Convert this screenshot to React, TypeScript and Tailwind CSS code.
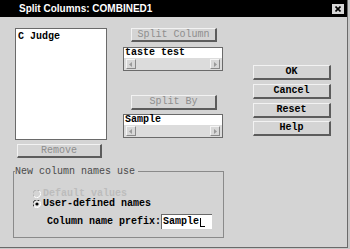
import React from 'react';

const MONO = "font-['Liberation_Mono','DejaVu_Sans_Mono',monospace]";

const Btn = ({ label, disabled = false, className = '' }: { label: string; disabled?: boolean; className?: string }) => (
  <div
    className={`shrink-0 flex items-center justify-center border-t border-l border-[#f2f2f2] border-b-2 border-r-2 border-b-[#5c5c5c] border-r-[#5c5c5c] bg-[#d4d4d4] text-[10px] leading-none ${MONO} ${
      disabled ? 'text-[#8e8e8e]' : 'font-bold text-black'
    } ${className}`}
  >
    {label}
  </div>
);

const Arrow = ({ dir }: { dir: 'left' | 'right' }) => (
  <div className="w-[10px] h-[10px] border-t border-l border-[#f4f4f4] border-b border-r border-b-[#8a8a8a] border-r-[#8a8a8a] bg-[#d8d8d8] flex items-center justify-center">
    <svg width="4" height="5" viewBox="0 0 4 5">
      {dir === 'left' ? <path d="M3 0 L0 2.5 L3 5 Z" fill="#9a9a9a" /> : <path d="M1 0 L4 2.5 L1 5 Z" fill="#9a9a9a" />}
    </svg>
  </div>
);

const ScrollField = ({ value }: { value: string }) => (
  <div className="w-[100px] shrink-0 border border-[#6a6a6a] bg-white">
    <div className={`h-[10px] pl-[1px] text-[10px] leading-[10px] font-bold text-black ${MONO}`}>{value}</div>
    <div className="h-[12px] bg-[#dcdcdc] flex items-center justify-between px-[2px]">
      <Arrow dir="left" />
      <Arrow dir="right" />
    </div>
  </div>
);

const Radio = ({ checked, disabled }: { checked: boolean; disabled?: boolean }) => (
  <svg width="8" height="8" viewBox="0 0 8 8" className="shrink-0">
    <circle cx="4" cy="4" r="3.5" fill={disabled ? '#d4d4d4' : '#e8e8e8'} />
    <path d="M1 6.5 A3.5 3.5 0 0 1 6.5 1" stroke={disabled ? '#b4b4b4' : '#3a3a3a'} strokeWidth="1" fill="none" />
    <path d="M6.5 1 A3.5 3.5 0 0 1 1 6.5" stroke="#ffffff" strokeWidth="1" fill="none" />
    {checked && <circle cx="4" cy="4" r="1.6" fill="#000" />}
  </svg>
);

export default function App() {
  return (
    <div className="w-[350px] h-[249px] bg-[#c8c8c8]">
      <div className="w-[348px] h-[248px] bg-[#d4d4d4] border-r border-b border-[#6a6a6a] flex flex-col">
        {/* Title bar */}
        <div className="h-[17px] shrink-0 bg-black flex items-center justify-between pl-[19px] pr-[3px]">
          <span className="text-white font-bold text-[10px] leading-none font-['Liberation_Sans',Arial,sans-serif]">
            Split Columns: COMBINED1
          </span>
          <div className="w-[12px] h-[10px] bg-[#d8d8d8] flex items-center justify-center">
            <svg width="6" height="6" viewBox="0 0 6 6">
              <path d="M0.5 0.5 L5.5 5.5 M5.5 0.5 L0.5 5.5" stroke="#000" strokeWidth="1.6" />
            </svg>
          </div>
        </div>

        {/* Body */}
        <div className="flex flex-row">
          <div className="w-[230px] flex flex-col">
            <div className="flex flex-row pt-[11px]">
              {/* List */}
              <div className="ml-[15px] w-[92px] flex flex-col">
                <div className={`h-[112px] shrink-0 bg-white border border-[#6a6a6a] pl-[2px] pt-[2px] text-[10px] leading-[11px] font-bold text-black ${MONO}`}>
                  C Judge
                </div>
                <Btn label="Remove" disabled className="mt-[4px] ml-[2px] w-[85px] h-[14px]" />
              </div>

              {/* Split columns */}
              <div className="ml-[16px] w-[100px] flex flex-col">
                <Btn label="Split Column" disabled className="ml-[8px] w-[86px] h-[14px]" />
                <div className="mt-[5px]">
                  <ScrollField value="taste test" />
                </div>
                <Btn label="Split By" disabled className="mt-[24px] ml-[8px] w-[86px] h-[15px]" />
                <div className="mt-[4px]">
                  <ScrollField value="Sample" />
                </div>
              </div>
            </div>

            {/* Group box */}
            <div className="relative shrink-0 mt-[13px] ml-[13px] w-[211px] h-[67px] border border-[#8a8a8a]">
              <span className={`absolute -top-[6px] left-[1px] bg-[#d4d4d4] pr-[3px] text-[10px] leading-[11px] text-[#4a4a4a] ${MONO}`}>
                New column names use
              </span>
              <div className="flex flex-col pl-[19px] pt-[17px]">
                <div className="flex items-center gap-[2px] h-[10px]">
                  <Radio checked={false} disabled />
                  <span className={`text-[10px] leading-none text-[#bcbcbc] font-bold ${MONO}`}>Default values</span>
                </div>
                <div className="flex items-center gap-[2px] h-[10px]">
                  <Radio checked />
                  <span className={`text-[10px] leading-none text-black font-bold ${MONO}`}>User-defined names</span>
                </div>
                <div className="flex items-center mt-[5px] ml-[14px]">
                  <span className={`text-[10px] leading-none text-black font-bold ${MONO}`}>Column name prefix:</span>
                  <div className={`w-[51px] h-[15px] bg-white border-t border-l border-[#6a6a6a] border-b-[#f0f0f0] border-r-[#f0f0f0] flex items-center pl-[1px] text-[10px] leading-none text-black font-bold ${MONO}`}>
                    Sample
                    <span className="inline-block w-[5px] h-[9px] border-l border-b border-black ml-[1px]" />
                  </div>
                </div>
              </div>
            </div>
          </div>

          {/* Action buttons */}
          <div className="ml-[23px] pt-[48px] flex flex-col">
            <Btn label="OK" className="w-[78px] h-[15px]" />
            <Btn label="Cancel" className="mt-[4px] w-[78px] h-[15px]" />
            <Btn label="Reset" className="mt-[4px] w-[78px] h-[15px]" />
            <Btn label="Help" className="mt-[3px] w-[78px] h-[15px]" />
          </div>
        </div>
      </div>
    </div>
  );
}
